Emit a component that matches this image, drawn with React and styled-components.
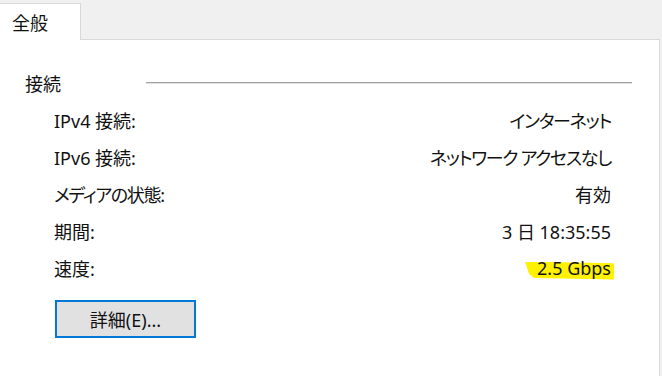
import React from 'react';
import styled, { createGlobalStyle } from 'styled-components';

const GlobalStyle = createGlobalStyle`
  html, body {
    margin: 0;
    padding: 0;
    background: #f0f0f0;
  }
  body {
    font-family: "Noto Sans", "Noto Sans CJK JP", sans-serif;
    font-feature-settings: "palt";
    color: #111;
  }
`;

const Window = styled.div`
  width: 662px;
  height: 376px;
  display: flex;
  flex-direction: column;
  overflow: hidden;
`;

const TabStrip = styled.div`
  display: flex;
  align-items: flex-end;
  height: 39px;
  padding-top: 3px;
  box-sizing: border-box;
`;

const Tab = styled.div`
  position: relative;
  z-index: 1;
  width: 81px;
  height: 37px;
  margin-bottom: -1px;
  box-sizing: border-box;
  padding-left: 12px;
  display: flex;
  align-items: center;
  background: #fff;
  border-top: 1px solid #d9d9d9;
  border-right: 1px solid #d9d9d9;
  font-size: 18px;
`;

const Panel = styled.div`
  flex: 1;
  width: 660px;
  box-sizing: border-box;
  background: #fff;
  border-top: 1px solid #d9d9d9;
  border-right: 1px solid #d9d9d9;
  padding: 24px 27px 0 25px;
`;

const GroupHeader = styled.div`
  display: flex;
  align-items: center;
  height: 37px;
`;

const GroupTitle = styled.span`
  width: 121px;
  font-size: 18px;
`;

const GroupLine = styled.div`
  flex: 1;
  height: 0;
  margin-top: 0;
  border-top: 1px solid #a0a0a0;
  border-bottom: 1px solid #e2e2e2;
`;

const Rows = styled.div`
  padding: 0 21px 0 29px;
`;

const Row = styled.div`
  display: flex;
  align-items: center;
  justify-content: space-between;
  height: 37px;
  font-size: 18px;
`;

const Label = styled.span`
  white-space: nowrap;
  letter-spacing: ${({ $kana }) => ($kana ? '-1.3px' : '0')};
`;

const Value = styled.span`
  position: relative;
  isolation: isolate;
  white-space: nowrap;
  letter-spacing: ${({ $kana }) => ($kana ? '-1.3px' : '0')};

  ${({ $marked }) => $marked && `
    &::before {
      content: "";
      position: absolute;
      z-index: -1;
      left: -12px;
      right: -3px;
      top: 6px;
      bottom: 0px;
      background: #fff200;
      clip-path: polygon(0 0, 100% 10%, 100% 100%, 9px 92%, 4px 70%);
    }
  `}
`;

const ButtonRow = styled.div`
  padding: 14px 0 0 30px;
`;

const Button = styled.button`
  width: 141px;
  height: 38px;
  box-sizing: border-box;
  border: 2px solid #0078d7;
  background: #e1e1e1;
  font-family: inherit;
  font-feature-settings: "palt";
  font-size: 18px;
  color: #111;
  padding: 0;
`;

const rows = [
  { label: 'IPv4 接続:', value: 'インターネット', valueKana: true },
  { label: 'IPv6 接続:', value: 'ネットワーク アクセスなし', valueKana: true },
  { label: 'メディアの状態:', labelKana: true, value: '有効' },
  { label: '期間:', value: '3 日 18:35:55' },
  { label: '速度:', value: '2.5 Gbps', marked: true },
];

export default function App() {
  return (
    <Window>
      <GlobalStyle />
      <TabStrip>
        <Tab>全般</Tab>
      </TabStrip>
      <Panel>
        <GroupHeader>
          <GroupTitle>接続</GroupTitle>
          <GroupLine />
        </GroupHeader>
        <Rows>
          {rows.map((r) => (
            <Row key={r.label}>
              <Label $kana={r.labelKana}>{r.label}</Label>
              <Value $kana={r.valueKana} $marked={r.marked}>{r.value}</Value>
            </Row>
          ))}
        </Rows>
        <ButtonRow>
          <Button>詳細(E)...</Button>
        </ButtonRow>
      </Panel>
    </Window>
  );
}
